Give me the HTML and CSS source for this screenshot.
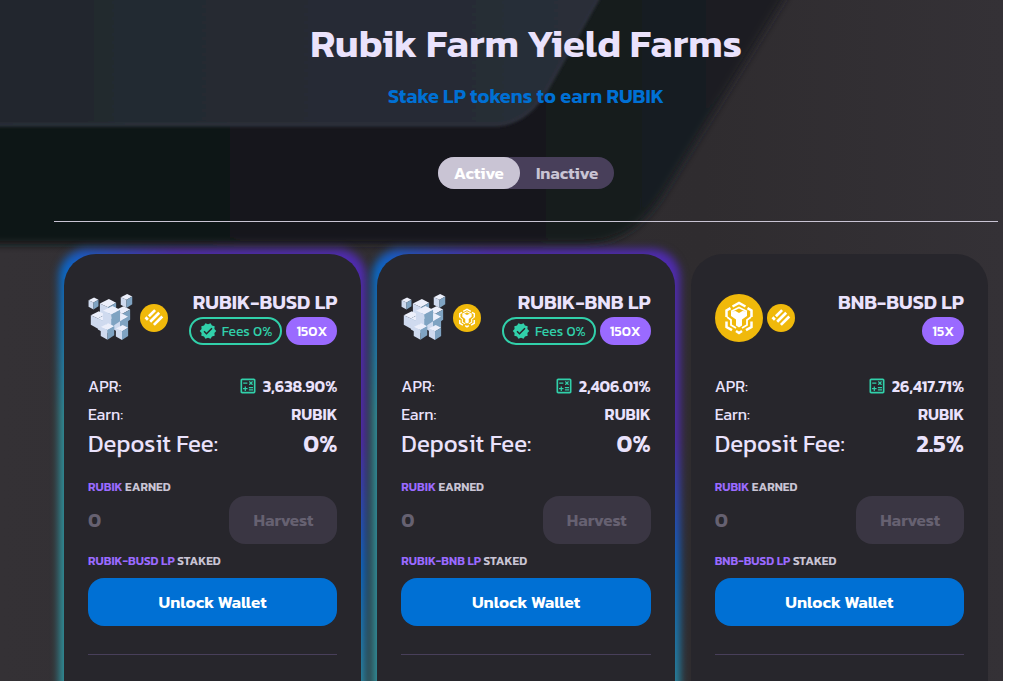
FILE: index.html
```html
<!DOCTYPE html>
<html lang="en">
<head>
<meta charset="utf-8">
<title>Rubik Farm Yield Farms</title>
<link rel="stylesheet" href="styles.css">
</head>
<body>
<svg class="sprite" aria-hidden="true">
  <defs>
    <linearGradient id="screen" x1="0" y1="0" x2="1" y2="0">
      <stop offset="0" stop-color="#22272c"/><stop offset=".5" stop-color="#252a33"/><stop offset="1" stop-color="#292e38"/>
    </linearGradient>
    <linearGradient id="bezel" x1="0" y1="0" x2="1" y2="0">
      <stop offset="0" stop-color="#0f1317"/><stop offset=".6" stop-color="#14181c"/><stop offset="1" stop-color="#1c1f23"/>
    </linearGradient>
    <linearGradient id="desk" x1="0" y1="0" x2="1" y2="0">
      <stop offset="0" stop-color="#343135"/><stop offset=".7" stop-color="#2f2c2f"/><stop offset="1" stop-color="#343136"/>
    </linearGradient>
    <filter id="soft" x="-10%" y="-10%" width="120%" height="120%"><feGaussianBlur stdDeviation="4"/></filter>
    <filter id="edge" x="-10%" y="-10%" width="120%" height="120%"><feGaussianBlur stdDeviation="1.5"/></filter>
  </defs>
  <symbol id="cube" viewBox="0 0 20 22">
    <path fill="#eceffb" d="M1 5 11 0l8 4-9 5z"/>
    <path fill="#cfdaef" d="M1 5l9 4v13l-9-5z"/>
    <path fill="#7fa3c2" d="M10 9l9-5v12l-9 6z"/>
  </symbol>
  <symbol id="rubik" viewBox="0 0 48 48">
    <use href="#cube" x="0" y="3" width="11" height="13"/>
    <use href="#cube" x="32" y="0" width="13" height="14"/>
    <use href="#cube" x="11" y="5" width="18" height="20"/>
    <use href="#cube" x="26" y="12" width="17" height="19"/>
    <use href="#cube" x="2" y="17" width="16" height="18"/>
    <use href="#cube" x="23" y="19" width="18" height="20"/>
    <use href="#cube" x="9" y="20" width="18" height="20"/>
    <use href="#cube" x="14" y="12" width="19" height="21"/>
    <use href="#cube" x="12" y="29" width="15" height="17"/>
    <use href="#cube" x="27" y="31" width="14" height="15"/>
  </symbol>
  <symbol id="busd" viewBox="0 0 28 28">
    <circle cx="14" cy="14" r="14" fill="#f0b90b"/>
    <g stroke="#fff" stroke-width="2.700">
      <path d="M8.900 12.300 15.100 6.100M10.200 17.800 19.200 8.800M13.900 20.900 22.300 12.500"/>
      <path d="M5.500 13.300l2.400 2.400"/>
    </g>
  </symbol>
  <symbol id="bnb" viewBox="0 0 48 48">
    <circle cx="24" cy="24" r="24" fill="#f0b90b"/>
    <g fill="none" stroke="#fff" stroke-width="2.500">
      <path d="M17.500 12.500 24 9l6.500 3.500M11.500 23v-6.500l4-2.300M36.500 23v-6.500l-4-2.300M11.500 27.500V33l5.500 3.200M36.500 27.500V33L31 36.200M21 37l3 2 3-2"/>
      <path stroke-width="1.800" d="M16 17.500l4-2 4-2 4 2 4 2M12 23l4 3v5l5 3M36 23l-4 3v5l-5 3"/>
    </g>
    <path fill="#fff" d="M16 17.500l4.500-.5L24 19l3.500-2 4.500.5V22l-5 3.500v6L24 33.500l-3-2v-6L16 22z"/>
  </symbol>
  <symbol id="verified" viewBox="0 0 24 24">
    <path d="M23 12l-2.440-2.780.340-3.680-3.610-.820-1.890-3.180L12 3 8.600 1.540 6.710 4.720l-3.610.810.340 3.680L1 12l2.440 2.780-.340 3.690 3.610.820 1.890 3.180L12 21l3.400 1.460 1.890-3.180 3.610-.820-.340-3.680L23 12zm-13 5l-4-4 1.410-1.410L10 14.170l6.590-6.590L18 9l-8 8z"/>
  </symbol>
  <symbol id="calc" viewBox="0 0 24 24">
    <path d="M19 3H5c-1.100 0-2 .900-2 2v14c0 1.100.900 2 2 2h14c1.100 0 2-.900 2-2V5c0-1.100-.900-2-2-2zm0 16H5V5h14v14z"/>
    <path d="M6.250 7.720h5v1.500h-5zM13 15.750h5v1.500h-5zM13 13.250h5v1.500h-5zM8 18h1.500v-2h2v-1.500h-2v-2H8v2H6V16h2zM14.090 10.950l1.410-1.410 1.410 1.410 1.060-1.060-1.410-1.420 1.410-1.410L16.910 6 15.500 7.410 14.090 6l-1.060 1.060 1.410 1.410-1.410 1.420z"/>
  </symbol>
</svg>
<div class="page">
  <svg class="backdrop" viewBox="0 0 1003 681" preserveAspectRatio="xMinYMin slice" aria-hidden="true">
    <rect width="1003" height="681" fill="url(#desk)"/>
    <path filter="url(#soft)" fill="url(#bezel)" d="M-40-40H808L662 196Q632 244 584 244H-40z"/>
    <path filter="url(#edge)" fill="url(#screen)" stroke="#2f323d" stroke-width="3" d="M-40-40H620L550 84Q528 125 494 125H-40z"/>
  </svg>
  <main class="content">
    <header class="hero">
      <h1 class="title">Rubik Farm Yield Farms</h1>
      <h2 class="subtitle">Stake LP tokens to earn RUBIK</h2>
      <div class="toggle">
        <button class="toggle-item is-active" type="button">Active</button>
        <button class="toggle-item" type="button">Inactive</button>
      </div>
    </header>
    <section class="cards">
      <article class="card is-featured">
        <div class="card-head">
          <div class="coins"><svg class="coin-lg"><use href="#rubik"/></svg><svg class="coin-sm"><use href="#busd"/></svg></div>
          <div class="pair"><h3 class="pair-name">RUBIK-BUSD LP</h3>
            <div class="tags"><span class="tag tag-fee"><svg class="tag-icon"><use href="#verified"/></svg>Fees 0%</span><span class="tag tag-mult">150X</span></div></div>
        </div>
        <div class="row"><span>APR:</span><span class="value"><button class="calc" type="button" aria-label="ROI calculator"><svg class="calc-icon"><use href="#calc"/></svg></button>3,638.90%</span></div>
        <div class="row"><span>Earn:</span><span class="value">RUBIK</span></div>
        <div class="row row-fee"><span>Deposit Fee:</span><span class="value">0%</span></div>
        <div class="label label-earned"><span class="accent">RUBIK</span> EARNED</div>
        <div class="harvest"><span class="earned">0</span><button class="btn btn-harvest" type="button" disabled>Harvest</button></div>
        <div class="label label-staked"><span class="accent">RUBIK-BUSD LP</span> STAKED</div>
        <button class="btn btn-unlock" type="button">Unlock Wallet</button>
        <hr class="rule">
      </article>
      <article class="card is-featured">
        <div class="card-head">
          <div class="coins"><svg class="coin-lg"><use href="#rubik"/></svg><svg class="coin-sm"><use href="#bnb"/></svg></div>
          <div class="pair"><h3 class="pair-name">RUBIK-BNB LP</h3>
            <div class="tags"><span class="tag tag-fee"><svg class="tag-icon"><use href="#verified"/></svg>Fees 0%</span><span class="tag tag-mult">150X</span></div></div>
        </div>
        <div class="row"><span>APR:</span><span class="value"><button class="calc" type="button" aria-label="ROI calculator"><svg class="calc-icon"><use href="#calc"/></svg></button>2,406.01%</span></div>
        <div class="row"><span>Earn:</span><span class="value">RUBIK</span></div>
        <div class="row row-fee"><span>Deposit Fee:</span><span class="value">0%</span></div>
        <div class="label label-earned"><span class="accent">RUBIK</span> EARNED</div>
        <div class="harvest"><span class="earned">0</span><button class="btn btn-harvest" type="button" disabled>Harvest</button></div>
        <div class="label label-staked"><span class="accent">RUBIK-BNB LP</span> STAKED</div>
        <button class="btn btn-unlock" type="button">Unlock Wallet</button>
        <hr class="rule">
      </article>
      <article class="card">
        <div class="card-head">
          <div class="coins"><svg class="coin-lg"><use href="#bnb"/></svg><svg class="coin-sm"><use href="#busd"/></svg></div>
          <div class="pair"><h3 class="pair-name">BNB-BUSD LP</h3>
            <div class="tags"><span class="tag tag-mult">15X</span></div></div>
        </div>
        <div class="row"><span>APR:</span><span class="value"><button class="calc" type="button" aria-label="ROI calculator"><svg class="calc-icon"><use href="#calc"/></svg></button>26,417.71%</span></div>
        <div class="row"><span>Earn:</span><span class="value">RUBIK</span></div>
        <div class="row row-fee"><span>Deposit Fee:</span><span class="value">2.5%</span></div>
        <div class="label label-earned"><span class="accent">RUBIK</span> EARNED</div>
        <div class="harvest"><span class="earned">0</span><button class="btn btn-harvest" type="button" disabled>Harvest</button></div>
        <div class="label label-staked"><span class="accent">BNB-BUSD LP</span> STAKED</div>
        <button class="btn btn-unlock" type="button">Unlock Wallet</button>
        <hr class="rule">
      </article>
    </section>
  </main>
</div>
</body>
</html>
```
FILE: styles.css
```css
* { box-sizing: border-box; }
body {
  margin: 0;
  padding-right: 19px;
  background: #fff;
  color: #eae2fc;
  font-family: Kanit, Inter, "Noto Sans", sans-serif;
  font-size: 16px;
}
h1, h2, h3 { margin: 0; font-weight: 600; }
button { font: inherit; border: 0; padding: 0; }
.sprite { position: absolute; width: 0; height: 0; }
.page { position: relative; height: 100vh; overflow: hidden; background: #322f34; }
.backdrop { position: absolute; inset: 0; width: 100%; height: 100%; }
.content { position: relative; padding: 21px 5px 0 54px; }
.hero {
  display: flex;
  flex-direction: column;
  align-items: center;
  padding-bottom: 32px;
  border-bottom: 1px solid #c9c4d4;
}
.title { font-size: 40px; line-height: 44px; }
.subtitle { margin-top: 17px; color: #0070d4; font-size: 20px; line-height: 28px; }
.toggle { display: flex; margin-top: 47px; border-radius: 16px; background: #483f5a; }
.toggle-item {
  height: 32px;
  padding: 0 16px;
  border-radius: 16px;
  background: none;
  color: #c9c4d4;
  font-size: 17px;
  font-weight: 600;
}
.toggle-item.is-active { background: #c9c4d4; color: #fff; }
.cards {
  position: relative;
  z-index: 0;
  display: grid;
  grid-template-columns: repeat(3, minmax(0, 1fr));
  gap: 16px;
  padding: 32px 10px 0;
}
.card {
  position: relative;
  display: flex;
  flex-direction: column;
  padding: 40px 24px 92px;
  border-radius: 32px;
  background: #27262c;
}
.card.is-featured { background: none; }
.card.is-featured::before,
.card.is-featured::after {
  content: "";
  position: absolute;
  inset: 0;
  z-index: -1;
  border-radius: 32px;
  background: #27262c;
}
.card.is-featured::before {
  inset: -5px;
  border-radius: 28px;
  background: linear-gradient(45deg, #2f8f9a 0%, #2f8f9a 42%, #0b68c6 60%, #4f2bb0 76%, #4f2bb0 100%);
  filter: blur(4px);
}
.card-head { display: flex; justify-content: space-between; height: 80px; }
.coins { display: flex; align-items: center; gap: 4px; height: 48px; }
.coin-lg { width: 48px; height: 48px; }
.coin-sm { width: 28px; height: 28px; }
.pair { display: flex; flex-direction: column; align-items: flex-end; }
.pair-name { font-size: 20px; line-height: 16px; padding-bottom: 7px; }
.tags { display: flex; gap: 4px; }
.tag {
  display: flex;
  align-items: center;
  height: 28px;
  padding: 0 10px;
  border-radius: 14px;
  font-size: 14px;
}
.tag-fee { gap: 5px; border: 2px solid #31d0aa; color: #31d0aa; padding: 0 8px; }
.tag-icon { width: 18px; height: 18px; fill: #31d0aa; }
.tag-mult { background: #9a6aff; color: #fff; font-weight: 500; }
.row { display: flex; justify-content: space-between; line-height: 24px; }
.row + .row { margin-top: 4px; }
.row + .row-fee { margin-top: 0; font-size: 24px; line-height: 36px; }
.value { display: flex; align-items: center; font-weight: 600; }
.calc { display: flex; margin-right: 5px; background: none; }
.calc-icon { width: 20px; height: 20px; fill: #31d0aa; }
.label { font-size: 12px; font-weight: 600; line-height: 18px; color: #c9c4d4; }
.label-earned { margin-top: 16px; }
.label-staked { margin-top: 8px; }
.accent { color: #9a6aff; }
.harvest { display: flex; justify-content: space-between; align-items: center; }
.earned { color: #666171; font-size: 20px; font-weight: 600; }
.btn { height: 48px; padding: 0 24px; border-radius: 16px; font-size: 17px; font-weight: 600; }
.btn-harvest { background: #3a3643; color: #666171; }
.btn-unlock { margin-top: 8px; background: #0070d4; color: #fff; }
.rule { width: 100%; height: 1px; margin: 28px 0 0; border: 0; background: #483f5a; }
```
